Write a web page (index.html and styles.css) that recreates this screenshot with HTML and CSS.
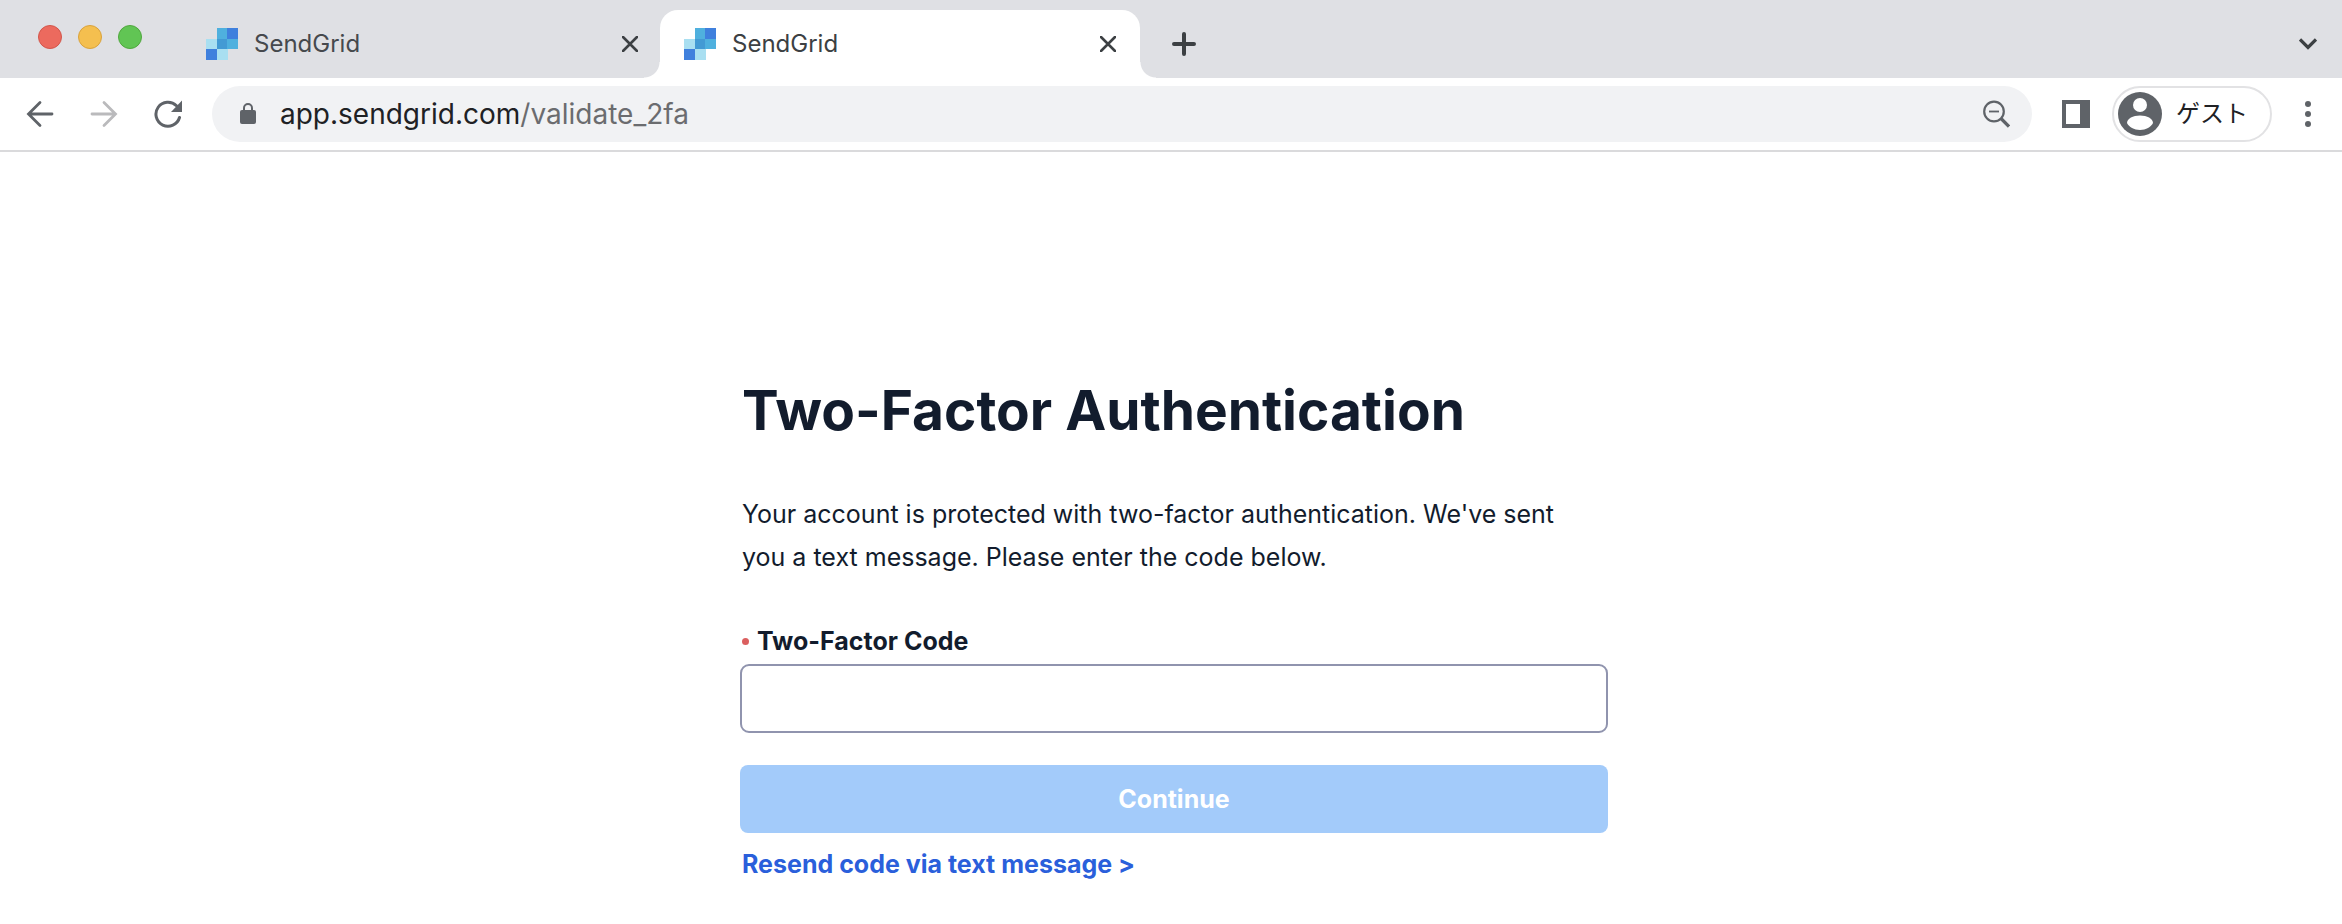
FILE: index.html
```html
<!DOCTYPE html>
<html lang="en">
<head>
<meta charset="utf-8">
<title>SendGrid</title>
<link rel="stylesheet" href="styles.css">
</head>
<body>
<svg class="defs" aria-hidden="true">
  <symbol id="logo" viewBox="0 0 32 32">
    <path fill="#a9dff1" d="M0 11h11v10H0zM11 21h11v11H11z"/>
    <path fill="#4fb0de" d="M11 0h10v11H11zM21 11h11v10H21z"/>
    <path fill="#3f80dd" d="M21 0h11v11H21zM0 21h11v11H0z"/>
    <path fill="#439ad4" d="M11 11h10v10H11z"/>
  </symbol>
  <symbol id="close" viewBox="0 0 16 16">
    <path d="M1 1l14 14M15 1L1 15" fill="none" stroke="#3c4043" stroke-width="2.6" stroke-linecap="round"/>
  </symbol>
</svg>

<header class="browser">
  <div class="tab-strip">
    <div class="lights" aria-hidden="true">
      <span class="light light-red"></span>
      <span class="light light-yellow"></span>
      <span class="light light-green"></span>
    </div>
    <div class="tab">
      <svg class="favicon" aria-hidden="true"><use href="#logo"/></svg>
      <span class="tab-title">SendGrid</span>
      <button class="icon-btn" type="button" aria-label="Close tab"><svg width="16" height="16"><use href="#close"/></svg></button>
    </div>
    <div class="tab tab-active">
      <svg class="favicon" aria-hidden="true"><use href="#logo"/></svg>
      <span class="tab-title">SendGrid</span>
      <button class="icon-btn" type="button" aria-label="Close tab"><svg width="16" height="16"><use href="#close"/></svg></button>
    </div>
    <button class="icon-btn new-tab" type="button" aria-label="New tab">
      <svg width="24" height="24" viewBox="0 0 24 24"><path d="M12 2v20M2 12h20" stroke="#3c4043" stroke-width="4" stroke-linecap="round"/></svg>
    </button>
    <button class="icon-btn tab-search" type="button" aria-label="Search tabs">
      <svg width="18" height="12" viewBox="0 0 18 12"><path d="M1 1.500l8 8 8-8" fill="none" stroke="#3c4043" stroke-width="3.200"/></svg>
    </button>
  </div>

  <div class="toolbar">
    <nav class="nav" aria-label="History">
      <button class="icon-btn" type="button" aria-label="Back">
        <svg width="28" height="28" viewBox="0 0 28 28"><path d="M26 14H3M14 2.500L2.500 14 14 25.500" fill="none" stroke="#5f6368" stroke-width="2.800" stroke-linecap="round"/></svg>
      </button>
      <button class="icon-btn" type="button" aria-label="Forward" disabled>
        <svg width="28" height="28" viewBox="0 0 28 28"><path d="M2 14h23M14 2.500L25.500 14 14 25.500" fill="none" stroke="#bababc" stroke-width="2.800" stroke-linecap="round"/></svg>
      </button>
      <button class="icon-btn" type="button" aria-label="Reload">
        <svg width="28" height="28" viewBox="0 0 28 28"><path d="M25.500 17.500A12 12 0 1 1 22.500 5.800" fill="none" stroke="#5f6368" stroke-width="3" stroke-linecap="round"/><path d="M28 .5V12H17z" fill="#5f6368"/></svg>
      </button>
    </nav>
    <div class="omnibox">
      <svg class="lock" width="16" height="22" viewBox="0 0 16 22" aria-hidden="true"><rect y="7" width="16" height="14" rx="2" fill="#5f6368"/><path d="M4 8V5a4 4 0 0 1 8 0v3" fill="none" stroke="#5f6368" stroke-width="2"/></svg>
      <span class="url">app.sendgrid.com<span class="url-path">/validate_2fa</span></span>
      <button class="icon-btn" type="button" aria-label="Zoom">
        <svg width="28" height="28" viewBox="0 0 28 28"><circle cx="12" cy="11.500" r="9.800" fill="none" stroke="#5f6368" stroke-width="2.200"/><path d="M7 11.500h10" stroke="#5f6368" stroke-width="1.800"/><path d="M19 18.500l8 8" stroke="#5f6368" stroke-width="3.200"/></svg>
      </button>
    </div>
    <button class="icon-btn side-panel" type="button" aria-label="Side panel">
      <svg width="28" height="28" viewBox="0 0 28 28"><path fill="#5f6368" fill-rule="evenodd" d="M0 0h28v28H0zM4 4v20h14V4z"/></svg>
    </button>
    <button class="profile" type="button">
      <svg width="44" height="44" viewBox="0 0 44 44" aria-hidden="true"><circle cx="22" cy="22" r="22" fill="#5f6368"/><circle cx="22" cy="13" r="7" fill="#fff"/><path d="M9 31c0-4.500 6-7.500 13-7.500s13 3 13 7.500c-2 4-7 7-13 7s-11-3-13-7z" fill="#fff"/></svg>
      <span>ゲスト</span>
    </button>
    <button class="icon-btn menu" type="button" aria-label="Menu">
      <svg width="6" height="26" viewBox="0 0 6 26"><g fill="#5f6368"><circle cx="3" cy="3" r="3"/><circle cx="3" cy="13" r="3"/><circle cx="3" cy="23" r="3"/></g></svg>
    </button>
  </div>
</header>

<main class="page">
  <form class="auth">
    <h1 class="title">Two-Factor Authentication</h1>
    <p class="intro">Your account is protected with two-factor authentication. We've sent you a text message. Please enter the code below.</p>
    <label class="label" for="code"><span class="required" aria-hidden="true"></span>Two-Factor Code</label>
    <input class="code" id="code" type="text" required>
    <button class="submit" type="submit" disabled>Continue</button>
    <a class="resend" href="#resend">Resend code via text message &gt;</a>
  </form>
</main>
</body>
</html>
```
FILE: styles.css
```css
* {
  box-sizing: border-box;
}

body {
  margin: 0;
  background: #fff;
  color: #121c2d;
  font-family: Inter, "Noto Sans CJK JP", sans-serif;
}

button {
  font: inherit;
  color: inherit;
}

svg {
  display: block;
  flex: none;
}

.defs {
  position: absolute;
  width: 0;
  height: 0;
}

.icon-btn {
  display: flex;
  flex: none;
  padding: 0;
  border: 0;
  background: none;
}

/* Browser window */
.browser {
  border-bottom: 2px solid #dadadc;
}

.tab-strip {
  display: flex;
  height: 78px;
  padding: 10px 25px 0 38px;
  background: #dfe0e4;
}

.lights {
  display: flex;
  gap: 16px;
  width: 144px;
  padding-top: 15px;
}

.light {
  width: 24px;
  height: 24px;
  border: 1px solid #d2564b;
  border-radius: 50%;
  background: #ec6a5e;
}

.light-yellow {
  border-color: #d9a23c;
  background: #f4bf4f;
}

.light-green {
  border-color: #50a73e;
  background: #61c554;
}

.tab {
  display: flex;
  align-items: center;
  gap: 16px;
  width: 480px;
  padding: 0 24px;
  color: #46494d;
  font-size: 24px;
  line-height: 32px;
}

.tab:not(.tab-active) {
  margin-right: -2px;
}

.tab-title {
  flex: 1;
}

.favicon {
  width: 32px;
  height: 32px;
}

.tab-active {
  position: relative;
  border-radius: 18px 18px 0 0;
  background: #fff;
  color: #3c4043;
}

/* Flared feet where the active tab meets the toolbar */
.tab-active::before,
.tab-active::after {
  content: "";
  position: absolute;
  bottom: 0;
  width: 16px;
  height: 16px;
}

.tab-active::before {
  right: 100%;
  background: radial-gradient(circle at 0 0, #dfe0e4 15px, #fff 16px);
}

.tab-active::after {
  left: 100%;
  background: radial-gradient(circle at 100% 0, #dfe0e4 15px, #fff 16px);
}

.new-tab {
  align-self: center;
  margin-left: 32px;
}

.tab-search {
  align-self: center;
  margin-left: auto;
}

.toolbar {
  display: flex;
  align-items: center;
  padding: 8px 31px 8px 26px;
}

.nav {
  display: flex;
  gap: 36px;
}

.omnibox {
  display: flex;
  flex: 1;
  align-items: center;
  height: 56px;
  margin-left: 30px;
  padding: 0 22px 0 28px;
  border-radius: 28px;
  background: #f1f2f4;
}

.url {
  flex: 1;
  margin-left: 24px;
  color: #202124;
  font-size: 28px;
  line-height: 36px;
}

.url-path {
  color: #6b6c6f;
}

.side-panel {
  margin-left: 30px;
}

.profile {
  display: flex;
  align-items: center;
  gap: 14px;
  height: 56px;
  margin-left: 22px;
  padding: 0 22px 0 4px;
  border: 2px solid #e2e2e4;
  border-radius: 28px;
  background: #fff;
  color: #202124;
  font-size: 24px;
  line-height: 32px;
}

.menu {
  margin-left: 33px;
}

/* Two-factor form */
.page {
  display: flex;
  justify-content: center;
  padding: 220px 24px 40px 30px;
}

.auth {
  display: flex;
  flex-direction: column;
  width: 100%;
  max-width: 868px;
}

.title {
  margin: 0 2px;
  font-size: 55px;
  font-weight: 700;
  line-height: 76px;
}

.intro {
  max-width: 840px;
  margin: 45px 2px 0;
  font-size: 25px;
  line-height: 43px;
}

.label {
  display: flex;
  align-items: center;
  gap: 8px;
  margin: 46px 2px 7px;
  font-size: 25px;
  font-weight: 700;
  line-height: 32px;
}

.required {
  width: 7px;
  height: 7px;
  border-radius: 50%;
  background: #db5f5f;
}

.code {
  height: 69px;
  padding: 0 20px;
  border: 2px solid #9094ae;
  border-radius: 9px;
  background: #fff;
  color: inherit;
  font: inherit;
  font-size: 25px;
}

.submit {
  height: 68px;
  margin-top: 32px;
  border: 0;
  border-radius: 8px;
  background: #a3cbfa;
  color: #fff;
  font-size: 25px;
  font-weight: 700;
}

.resend {
  align-self: flex-start;
  margin: 15px 2px 0;
  color: #2a5fdb;
  font-size: 25px;
  font-weight: 700;
  line-height: 32px;
  text-decoration: none;
}
```
